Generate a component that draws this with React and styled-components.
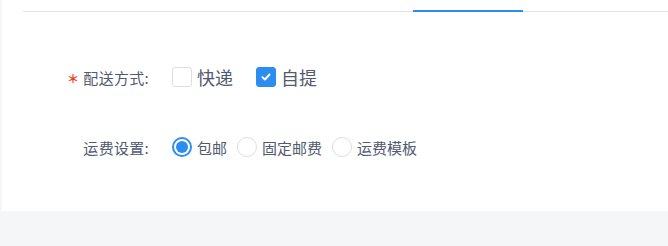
import React, { useState } from "react";
import styled, { createGlobalStyle } from "styled-components";

const GlobalStyle = createGlobalStyle`
  html, body {
    margin: 0;
    padding: 0;
    background: #f5f6f8;
    font-family: "Noto Sans CJK SC", "Noto Sans", sans-serif;
    color: #515a6e;
  }
`;

const Page = styled.div`
  width: 668px;
  height: 246px;
  padding-left: 2px;
  box-sizing: border-box;
  background: #f5f6f8;
`;

const Panel = styled.div`
  height: 211px;
  background: #fff;
  padding-left: 21px;
  display: flex;
  flex-direction: column;
`;

const TabNav = styled.div`
  height: 11px;
  display: flex;
  border-bottom: 1px solid #e2e3e5;
`;

const Tab = styled.div`
  width: ${({ width }) => width}px;
  box-sizing: border-box;
  margin-bottom: -1px;
  border-bottom: 2px solid ${({ active }) => (active ? "#2d8cf0" : "transparent")};
`;

const Form = styled.div`
  margin-left: -21px;
  padding-top: 48px;
  display: flex;
  flex-direction: column;
  gap: 36px;
`;

const Row = styled.div`
  display: flex;
  align-items: center;
  height: 34px;
`;

const Label = styled.div`
  width: 158px;
  box-sizing: border-box;
  padding-right: 11px;
  display: flex;
  align-items: center;
  justify-content: flex-end;
  font-size: 15px;
  letter-spacing: 0.3px;
  color: #515a6e;
  flex-shrink: 0;
`;

const Star = styled.span`
  color: #ed4014;
  font-size: 12px;
  font-weight: 700;
  margin-right: 4px;
  margin-top: 2px;
  font-family: "Noto Sans CJK SC", sans-serif;
`;

const Controls = styled.div`
  display: flex;
  align-items: center;
  margin-left: 12px;
  gap: ${({ gap }) => gap}px;
`;

const Option = styled.label`
  display: flex;
  align-items: center;
  gap: ${({ gap }) => gap}px;
  cursor: pointer;
  font-size: ${({ size }) => size}px;
  color: #515a6e;
  line-height: 1;
`;

const Box = styled.span`
  width: 20px;
  height: 20px;
  box-sizing: border-box;
  border-radius: 3px;
  border: 1px solid ${({ checked }) => (checked ? "#2d8cf0" : "#dcdee2")};
  background: ${({ checked }) => (checked ? "#2d8cf0" : "#fff")};
  display: flex;
  align-items: center;
  justify-content: center;
`;

const Circle = styled.span`
  width: 20px;
  height: 20px;
  box-sizing: border-box;
  border-radius: 50%;
  border: ${({ checked }) => (checked ? "2px solid #2d8cf0" : "1px solid #dcdee2")};
  background: #fff;
  display: flex;
  align-items: center;
  justify-content: center;
`;

const Dot = styled.span`
  width: 12px;
  height: 12px;
  border-radius: 50%;
  background: #2d8cf0;
`;

const Check = () => (
  <svg width="12" height="12" viewBox="0 0 12 12">
    <path
      d="M2.5 6.2 L5 8.5 L9.5 3.5"
      fill="none"
      stroke="#fff"
      strokeWidth="2"
      strokeLinecap="round"
      strokeLinejoin="round"
    />
  </svg>
);

const deliveryOptions = ["快递", "自提"];
const feeOptions = ["包邮", "固定邮费", "运费模板"];

export default function App() {
  const [delivery, setDelivery] = useState({ 快递: false, 自提: true });
  const [fee, setFee] = useState("包邮");

  return (
    <>
      <GlobalStyle />
      <Page>
        <Panel>
          <TabNav>
            <Tab width={390} />
            <Tab width={110} active />
          </TabNav>
          <Form>
            <Row>
              <Label>
                <Star>＊</Star>配送方式:
              </Label>
              <Controls gap={23}>
                {deliveryOptions.map((name) => (
                  <Option
                    key={name}
                    size={18}
                    gap={5}
                    onClick={() => setDelivery({ ...delivery, [name]: !delivery[name] })}
                  >
                    <Box checked={delivery[name]}>{delivery[name] && <Check />}</Box>
                    {name}
                  </Option>
                ))}
              </Controls>
            </Row>
            <Row>
              <Label>运费设置:</Label>
              <Controls gap={10}>
                {feeOptions.map((name) => (
                  <Option key={name} size={15} gap={5} onClick={() => setFee(name)}>
                    <Circle checked={fee === name}>{fee === name && <Dot />}</Circle>
                    {name}
                  </Option>
                ))}
              </Controls>
            </Row>
          </Form>
        </Panel>
      </Page>
    </>
  );
}
